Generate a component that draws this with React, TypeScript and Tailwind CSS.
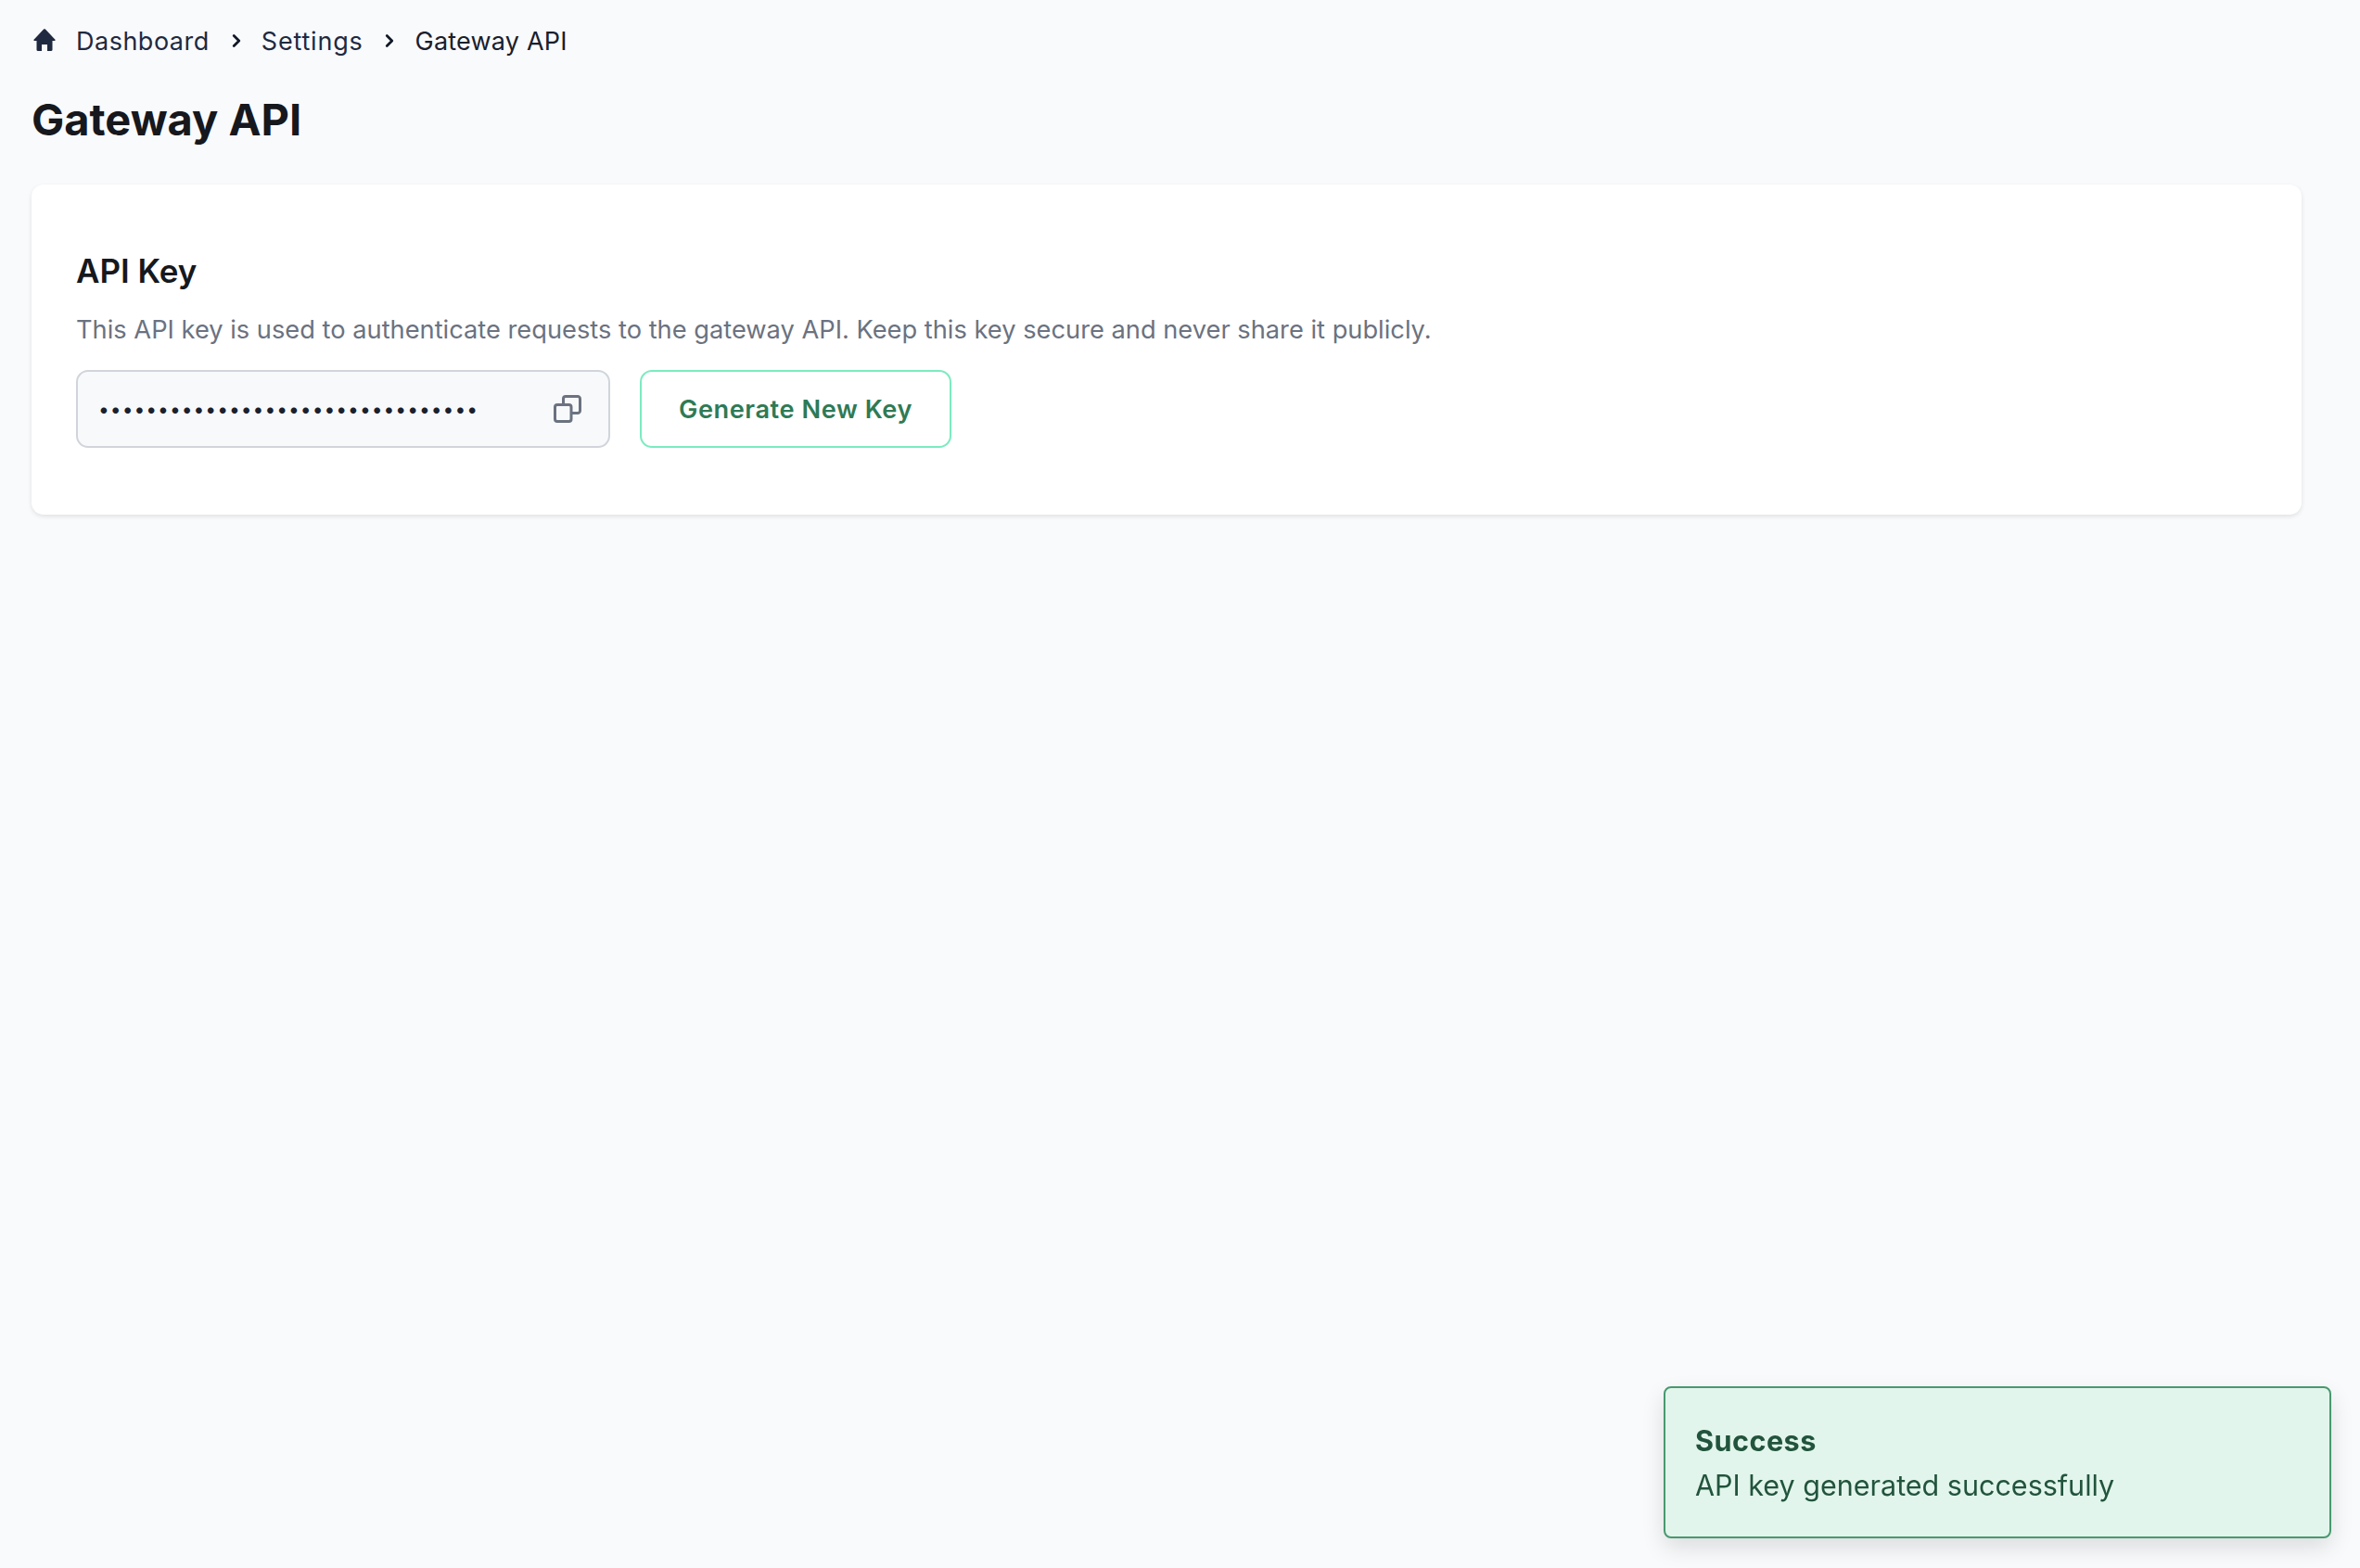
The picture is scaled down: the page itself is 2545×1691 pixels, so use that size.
import { ChevronRight } from "lucide-react"

function HomeIcon() {
  return (
    <svg viewBox="0 0 24 24" className="ml-[2px] w-6 h-6 -translate-y-[2px] text-[#1f2a40] shrink-0" fill="currentColor">
      <path d="M11.1.6c.5-.5 1.3-.5 1.8 0l10.6 11.2c.4.5.1 1.2-.5 1.2h-2.5v9.8c0 .7-.5 1.2-1.2 1.2H15v-7H9v7H4.7c-.7 0-1.2-.5-1.2-1.2V13H1c-.6 0-.9-.7-.5-1.2z" />
    </svg>
  )
}

function CopyIcon() {
  return (
    <svg viewBox="0 0 30 30" className="w-[30px] h-[30px]" fill="none" stroke="#6b7280" strokeWidth="3">
      <path d="M10.5 10V4A2.5 2.5 0 0 1 13 1.5h13A2.5 2.5 0 0 1 28.5 4v13a2.5 2.5 0 0 1-2.5 2.5h-7" />
      <rect x="1.5" y="10.5" width="17.5" height="18" rx="2.5" />
    </svg>
  )
}

export default function App() {
  return (
    <div className="min-h-[1691px] bg-[#f9fafc] px-[34px] pr-[63px] pt-[29px] font-['Inter',sans-serif] text-[#1a202c]">
      {/* Breadcrumb */}
      <nav className="flex items-center h-[32px] text-[27px] text-[#1f2a40]">
        <HomeIcon />
        <span className="ml-[22px] tracking-[0.5px]">Dashboard</span>
        <ChevronRight className="ml-[18px] w-[22px] h-[22px] -translate-y-[1px] text-[#111827]" strokeWidth={3} />
        <span className="ml-[16px] tracking-[0.8px]">Settings</span>
        <ChevronRight className="ml-[17px] w-[22px] h-[22px] -translate-y-[1px] text-[#111827]" strokeWidth={3} />
        <span className="ml-[17px] tracking-[0.2px] text-[#1a202c]">Gateway API</span>
      </nav>

      <h1 className="mt-[38px] text-[47px] leading-[60px] font-bold text-[#16181d]">Gateway API</h1>

      {/* API key card */}
      <section className="mt-[40px] bg-white rounded-[13px] shadow-[0_2px_5px_rgba(0,0,0,0.1)] h-[356px] px-[48px] pt-[71px]">
        <h2 className="text-[35px] leading-[44px] font-semibold text-[#16181d]">API Key</h2>
        <p className="mt-[22px] text-[27.26px] leading-[40px] text-[#6b7280]">
          This API key is used to authenticate requests to the gateway API. Keep this key secure and never share it publicly.
        </p>
        <div className="mt-[23px] flex gap-[32px]">
          <div className="relative w-[576px] h-[84px]">
            <input
              type="password"
              readOnly
              value="sk_live_9f2c4a7e1b3d5c8a0e6f2b4d"
              className="w-full h-full rounded-[13px] border-2 border-[#d1d5db] bg-[#f8f9fb] pl-[22px] pr-[70px] text-[21px] tracking-[1px] text-[#1a202c] outline-none"
            />
            <button className="absolute right-[31px] top-[27px]">
              <CopyIcon />
            </button>
          </div>
          <button className="w-[336px] h-[84px] pt-[2px] rounded-[13px] border-2 border-[#7cebc0] bg-white text-[27.2px] tracking-[0.55px] font-semibold text-[#2f7a55]">
            Generate New Key
          </button>
        </div>
      </section>

      {/* Toast */}
      <div className="fixed right-[31px] bottom-[32px] w-[720px] h-[164px] rounded-[8px] border-2 border-[#48996f] bg-[#e2f5ec] px-[32px] pt-[35px] text-[#22543d] shadow-[0_10px_24px_rgba(0,0,0,0.12)]">
        <div className="text-[30.6px] tracking-[0.45px] leading-[44px] font-bold">Success</div>
        <div className="mt-[3px] text-[30.5px] leading-[46px]">API key generated successfully</div>
      </div>
    </div>
  )
}
